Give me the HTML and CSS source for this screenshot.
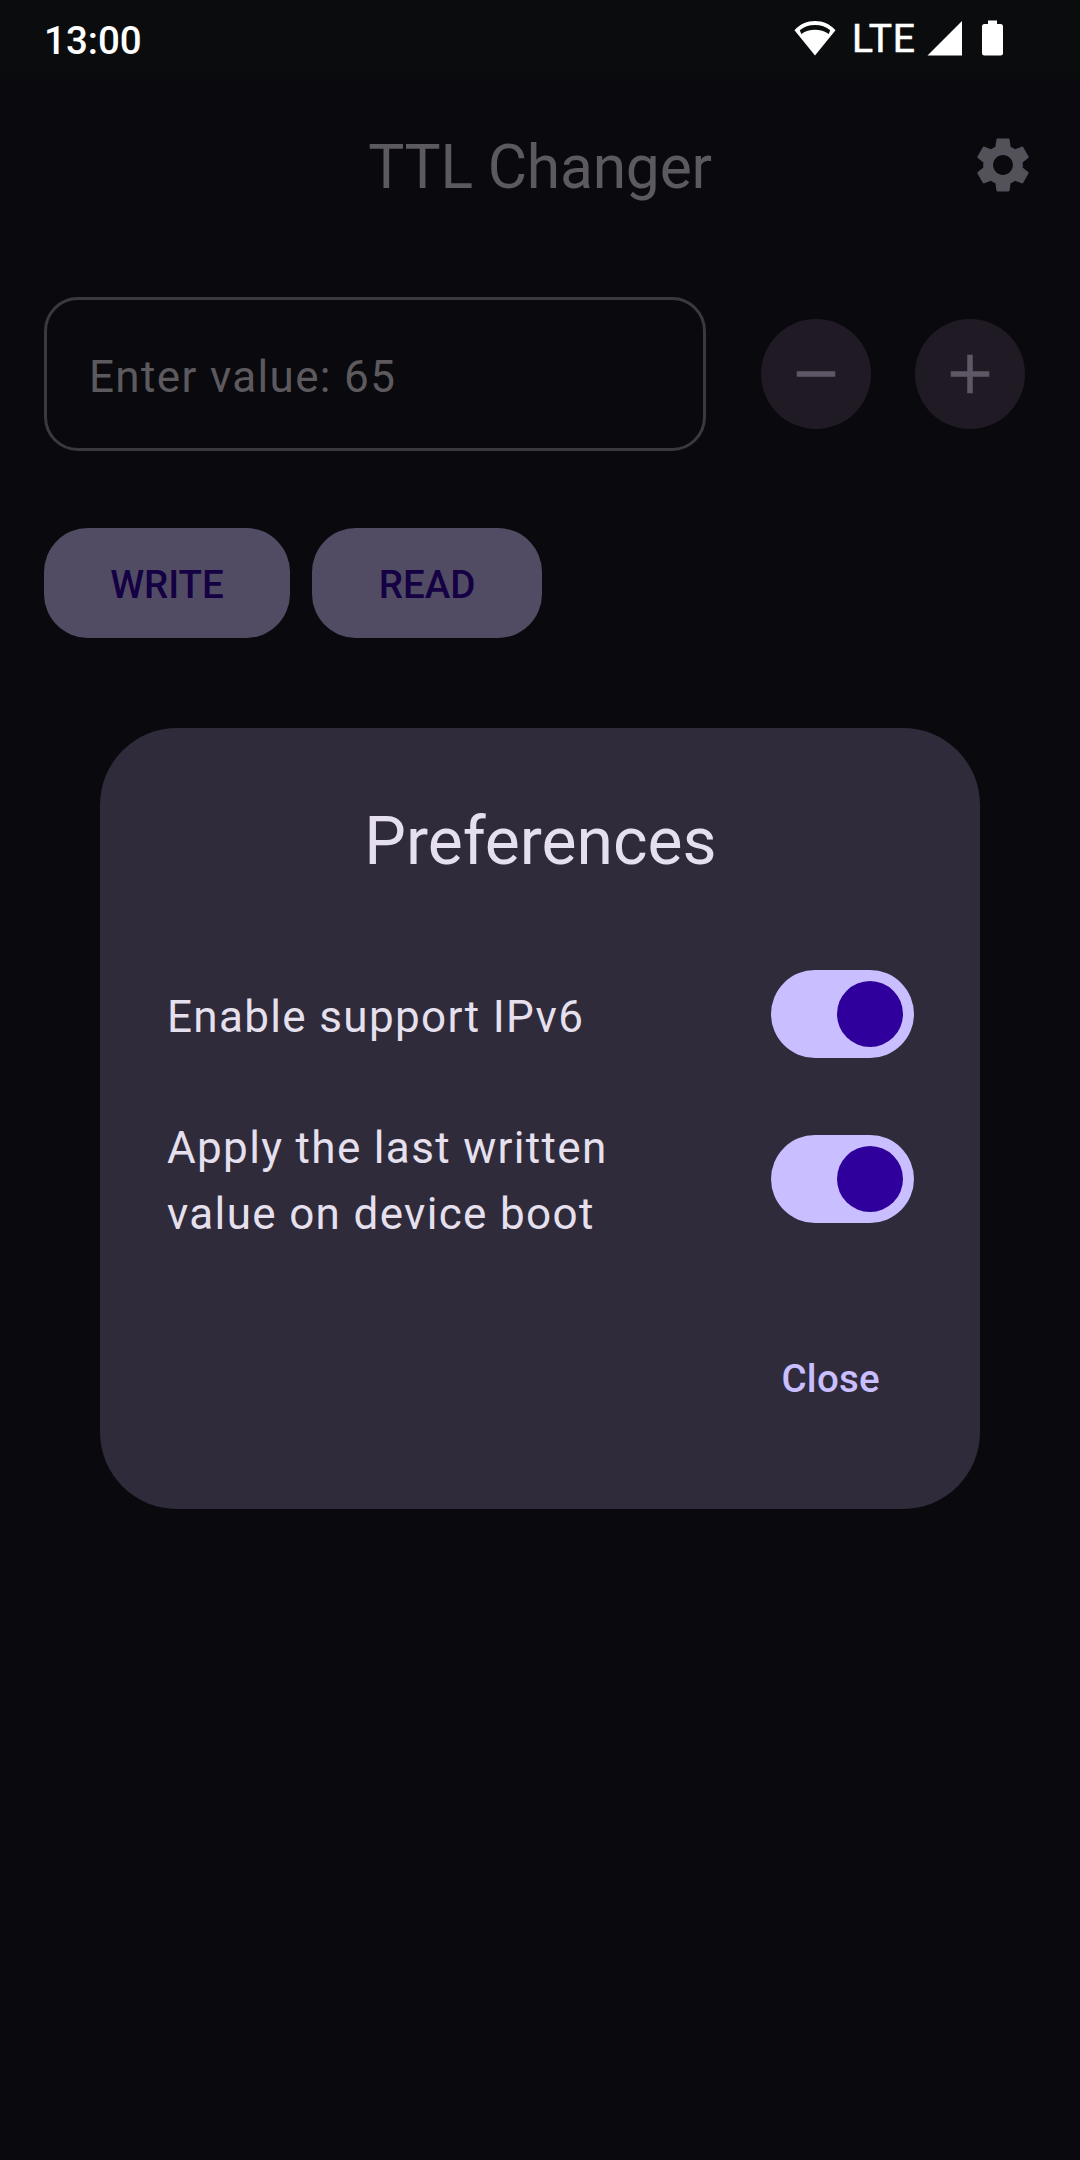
FILE: index.html
```html
<!DOCTYPE html>
<html lang="en">
<head>
<meta charset="utf-8">
<title>TTL Changer</title>
<link rel="stylesheet" href="styles.css">
</head>
<body>
<div class="screen">
  <header class="status-bar">
    <span class="clock">13:00</span>
    <div class="status-icons">
      <svg class="wifi" width="42" height="36" viewBox="0 0 42 36"><path fill="#fff" fill-rule="evenodd" d="M21 1C13 1 6 4 .5 10.300L21 35.500 41.500 10.300C36 4 29 1 21 1ZM21 5C27 5 32 6.800 36.200 10.200L34.700 14C30.500 11 26 9.800 21 9.800S11.500 11 7.300 14L5.800 10.200C10 6.800 15 5 21 5Z"/></svg>
      <span class="network">LTE</span>
      <svg class="signal" width="36" height="36" viewBox="0 0 36 36"><path fill="#fff" d="M35 1V35.500H.5Z"/></svg>
      <svg class="battery" width="21" height="36" viewBox="0 0 21 36"><path fill="#fff" d="M6 .5h9V4h3.500Q21 4 21 6.500V33Q21 35.500 18.500 35.500H2.500Q0 35.500 0 33V6.500Q0 4 2.500 4H6Z"/></svg>
    </div>
  </header>

  <div class="top-bar">
    <h1 class="app-title">TTL Changer</h1>
    <svg class="settings" width="66" height="66" viewBox="0 0 24 24"><path fill="currentColor" d="M19.140 12.940c.04-.3.06-.61.06-.94 0-.32-.02-.64-.07-.94l2.030-1.580c.18-.14.23-.41.12-.61l-1.920-3.320c-.12-.22-.37-.29-.59-.22l-2.390.96c-.5-.38-1.030-.7-1.620-.94l-.36-2.540c-.04-.24-.24-.41-.48-.41h-3.840c-.24 0-.43.17-.47.41l-.36 2.540c-.59.24-1.130.57-1.620.94l-2.390-.96c-.22-.08-.47 0-.59.22L2.740 8.870c-.12.21-.08.47.12.61l2.030 1.580c-.05.3-.09.63-.09.94s.02.64.07.94l-2.030 1.580c-.18.14-.23.41-.12.61l1.920 3.320c.12.22.37.29.59.22l2.390-.96c.5.38 1.030.7 1.620.94l.36 2.540c.05.24.24.41.48.41h3.840c.24 0 .44-.17.47-.41l.36-2.540c.59-.24 1.130-.56 1.620-.94l2.390.96c.22.08.47 0 .59-.22l1.920-3.320c.12-.22.07-.47-.12-.61l-2.010-1.580zM12 15.600c-1.980 0-3.600-1.620-3.600-3.600s1.620-3.600 3.600-3.600 3.600 1.620 3.600 3.600-1.620 3.600-3.600 3.600z"/></svg>
  </div>

  <div class="value-row">
    <div class="field">Enter value: 65</div>
    <div class="round"><svg width="66" height="66" viewBox="0 0 24 24"><path fill="currentColor" d="M5 11h14v2H5z"/></svg></div>
    <div class="round"><svg width="66" height="66" viewBox="0 0 24 24"><path fill="currentColor" d="M19 13h-6v6h-2v-6H5v-2h6V5h2v6h6z"/></svg></div>
  </div>

  <div class="actions">
    <div class="button write">WRITE</div>
    <div class="button read">READ</div>
  </div>

  <section class="dialog">
    <h2 class="dialog-title">Preferences</h2>
    <div class="option single">
      <span class="label">Enable support IPv6</span>
      <span class="switch"><span class="thumb"></span></span>
    </div>
    <div class="option tall">
      <span class="label">Apply the last written<br>value on device boot</span>
      <span class="switch"><span class="thumb"></span></span>
    </div>
    <div class="dialog-actions"><span class="close">Close</span></div>
  </section>
</div>
</body>
</html>
```
FILE: styles.css
```css
* { box-sizing: border-box; }

body {
  margin: 0;
  background: #0a0a0e;
  font-family: Roboto, "Noto Sans", sans-serif;
}

svg { display: block; flex: none; }

.screen {
  display: flex;
  flex-direction: column;
  width: 1080px;
  height: 2160px;
  overflow: hidden;
  background: #0a0a0e;
}

.status-bar {
  display: flex;
  justify-content: space-between;
  height: 88px;
  padding: 0 77px 0 44px;
  background: linear-gradient(#0a0c0d 0 72px, #0a0a0e 86px);
  color: #fff;
}

.clock {
  padding-top: 18px;
  font-size: 38.5px;
  font-weight: 500;
  line-height: 46px;
}

.status-icons {
  display: flex;
  align-items: flex-start;
  padding-top: 20px;
}

.network {
  width: 75px;
  margin: -4px 0 0 16px;
  font-size: 39px;
  line-height: 46px;
  letter-spacing: 0.9px;
  -webkit-text-stroke: 0.6px #fff;
}

.battery { margin-left: 19px; }

.top-bar {
  display: grid;
  grid-template-columns: 66px 1fr 66px;
  height: 154px;
  padding: 41px 44px 0;
}

.app-title {
  grid-column: 2;
  margin: 0;
  color: #5c5a5f;
  font-size: 60.5px;
  font-weight: 400;
  line-height: 77px;
  letter-spacing: -0.2px;
  text-align: center;
}

.settings {
  margin-top: 3px;
  color: #535159;
}

.value-row {
  display: flex;
  align-items: center;
  gap: 44px;
  margin-top: 55px;
  padding: 0 44px;
}

.field {
  width: 662px;
  height: 154px;
  margin-right: 11px;
  padding: 44px 42px;
  border: 3px solid #3a393e;
  border-radius: 34px;
  color: #5c5a5f;
  font-size: 44px;
  line-height: 66px;
  letter-spacing: 1.34px;
}

.round {
  display: flex;
  align-items: center;
  justify-content: center;
  width: 110px;
  height: 110px;
  border-radius: 50%;
  background: #201a25;
  color: #5e5766;
}

.actions {
  display: flex;
  gap: 22px;
  margin-top: 77px;
  padding: 0 44px;
}

.button {
  height: 110px;
  border-radius: 44px;
  background: #514c64;
  color: #140042;
  font-size: 38.5px;
  font-weight: 500;
  line-height: 114px;
  text-align: center;
}

.write { width: 246px; }
.read { width: 230px; }

.dialog {
  display: flex;
  flex-direction: column;
  width: 880px;
  height: 781px;
  margin: 90px 100px 0;
  padding: 70px 66px 66px 67px;
  border-radius: 77px;
  background: #2f2b3b;
  color: #e6e0ee;
}

.dialog-title {
  margin: 0;
  font-size: 66px;
  font-weight: 400;
  line-height: 88px;
  text-align: center;
}

.option {
  display: flex;
  align-items: center;
  justify-content: space-between;
  height: 132px;
  margin-top: 62px;
}

.option.tall { margin-top: 33px; }

.label {
  padding-top: 4px;
  font-size: 44px;
  line-height: 66px;
  letter-spacing: 1.34px;
}

.single .label { padding-top: 6px; }

.switch {
  display: flex;
  justify-content: flex-end;
  width: 143px;
  height: 88px;
  padding: 11px;
  border-radius: 44px;
  background: #c9beff;
}

.thumb {
  width: 66px;
  height: 66px;
  border-radius: 50%;
  background: #2f009b;
}

.dialog-actions {
  display: flex;
  justify-content: flex-end;
  margin-top: 106px;
  padding-right: 34px;
}

.close {
  color: #c9beff;
  font-size: 38.5px;
  font-weight: 500;
  line-height: 55px;
  letter-spacing: 0.275px;
}
```
